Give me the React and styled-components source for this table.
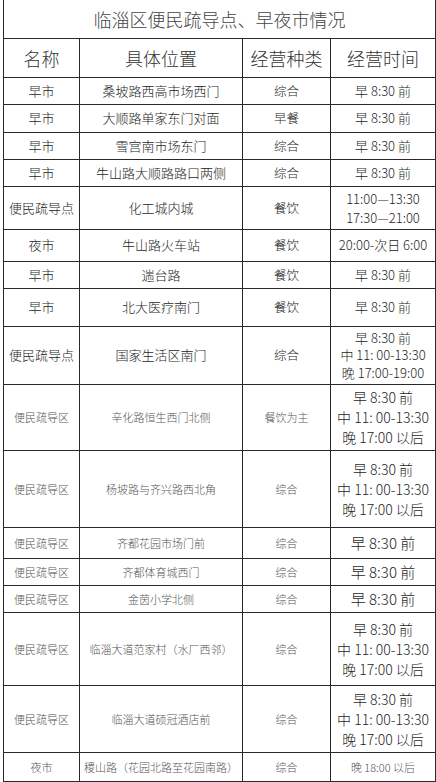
import React from 'react';
import styled, { createGlobalStyle } from 'styled-components';

const GlobalStyle = createGlobalStyle`
  html, body {
    margin: 0;
    padding: 0;
    background: #fff;
  }
  body {
    font-family: "Noto Sans CJK SC", "Noto Sans", sans-serif;
    font-weight: 300;
    color: #1a1a1a;
  }
`;

const Page = styled.div`
  width: 436px;
  padding: 0 2px 0 3px;
  box-sizing: border-box;
`;

const Table = styled.table`
  width: 432px;
  table-layout: fixed;
  border-collapse: collapse;
`;

const Row = styled.tr`
  height: ${({ h }) => h}px;
`;

const TitleCell = styled.td`
  border: 1px solid #2a2a2a;
  border-top: none;
  text-align: center;
  vertical-align: middle;
  font-size: 18px;
  line-height: 1;
  color: #444;
  padding: 0;
`;

const HeadCell = styled.th`
  border: 1px solid #2a2a2a;
  text-align: center;
  vertical-align: middle;
  font-weight: 300;
  font-size: 18px;
  line-height: 1;
  color: #333;
  padding: 0;
`;

const Cell = styled.td`
  border: 1px solid #2a2a2a;
  text-align: center;
  vertical-align: middle;
  padding: 0;
  white-space: nowrap;
  font-size: ${({ size }) => size}px;
  line-height: ${({ lh }) => lh || 18}px;
  color: ${({ faded }) => (faded ? '#555' : '#1e1e1e')};
`;

const Line = styled.div`
  display: block;
`;

const rows = [
  { h: 27, name: '早市', place: '桑坡路西高市场西门', kind: '综合', times: ['早 8:30 前'] },
  { h: 28, name: '早市', place: '大顺路单家东门对面', kind: '早餐', times: ['早 8:30 前'] },
  { h: 27, name: '早市', place: '雪宫南市场东门', kind: '综合', times: ['早 8:30 前'] },
  { h: 27, name: '早市', place: '牛山路大顺路路口两侧', kind: '综合', times: ['早 8:30 前'] },
  { h: 43, name: '便民疏导点', place: '化工城内城', kind: '餐饮', times: ['11:00—13:30', '17:30—21:00'], lh: 19 },
  { h: 32, name: '夜市', place: '牛山路火车站', kind: '餐饮', times: ['20:00-次日 6:00'] },
  { h: 27, name: '早市', place: '遄台路', kind: '餐饮', times: ['早 8:30 前'] },
  { h: 38, name: '早市', place: '北大医疗南门', kind: '餐饮', times: ['早 8:30 前'] },
  { h: 58, name: '便民疏导点', place: '国家生活区南门', kind: '综合', times: ['早 8:30 前', '中 11: 00-13:30', '晚 17:00-19:00'], lh: 17.5 },
  { h: 66, faded: true, name: '便民疏导区', place: '辛化路恒生西门北侧', kind: '餐饮为主', times: ['早 8:30 前', '中 11: 00-13:30', '晚 17:00 以后'], timeSize: 14, lh: 20 },
  { h: 77, faded: true, name: '便民疏导区', place: '杨坡路与齐兴路西北角', kind: '综合', times: ['早 8:30 前', '中 11: 00-13:30', '晚 17:00 以后'], timeSize: 14, lh: 20 },
  { h: 31, faded: true, name: '便民疏导区', place: '齐都花园市场门前', kind: '综合', times: ['早 8:30 前'], timeSize: 15 },
  { h: 27, faded: true, name: '便民疏导区', place: '齐都体育城西门', kind: '综合', times: ['早 8:30 前'], timeSize: 15 },
  { h: 27, faded: true, name: '便民疏导区', place: '金茵小学北侧', kind: '综合', times: ['早 8:30 前'], timeSize: 15 },
  { h: 73, faded: true, name: '便民疏导区', place: '临淄大道范家村（水厂西邻）', kind: '综合', times: ['早 8:30 前', '中 11: 00-13:30', '晚 17:00 以后'], timeSize: 14, lh: 20 },
  { h: 67, faded: true, name: '便民疏导区', place: '临淄大道硕冠酒店前', kind: '综合', times: ['早 8:30 前', '中 11: 00-13:30', '晚 17:00 以后'], timeSize: 14, lh: 20 },
  { h: 29, faded: true, name: '夜市', place: '稷山路（花园北路至花园南路）', kind: '综合', times: ['晚 18:00 以后'], timeSize: 11 },
];

const App = () => (
  <Page>
    <GlobalStyle />
    <Table>
      <colgroup>
        <col style={{ width: 76 }} />
        <col style={{ width: 163 }} />
        <col style={{ width: 88 }} />
        <col style={{ width: 105 }} />
      </colgroup>
      <thead>
        <Row h={38}>
          <TitleCell colSpan={4}>临淄区便民疏导点、早夜市情况</TitleCell>
        </Row>
        <Row h={39}>
          <HeadCell>名称</HeadCell>
          <HeadCell>具体位置</HeadCell>
          <HeadCell>经营种类</HeadCell>
          <HeadCell>经营时间</HeadCell>
        </Row>
      </thead>
      <tbody>
        {rows.map((r, i) => {
          const base = r.faded ? 11 : 13;
          return (
            <Row key={i} h={r.h}>
              <Cell size={base} faded={r.faded}>{r.name}</Cell>
              <Cell size={base} faded={r.faded}>{r.place}</Cell>
              <Cell size={r.faded ? 11 : 12.5} faded={r.faded}>{r.kind}</Cell>
              <Cell size={r.timeSize || 13} lh={r.lh} faded={r.faded && r.timeSize === 11}>
                {r.times.map((t, j) => (
                  <Line key={j}>{t}</Line>
                ))}
              </Cell>
            </Row>
          );
        })}
      </tbody>
    </Table>
  </Page>
);

export default App;
